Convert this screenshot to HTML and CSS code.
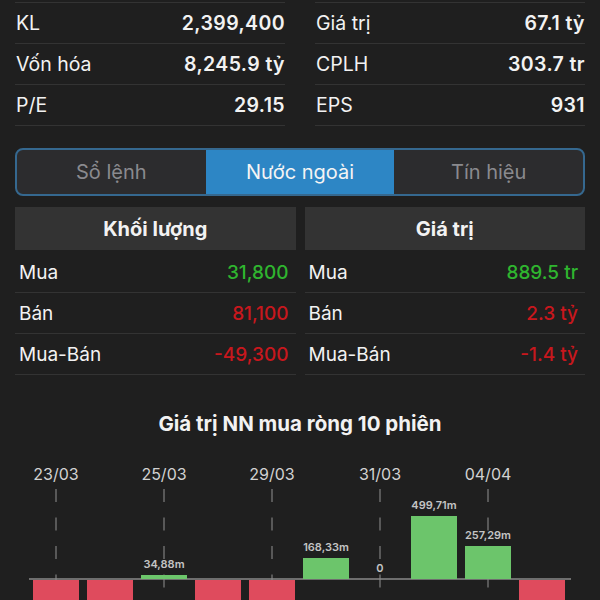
FILE: index.html
```html
<!DOCTYPE html>
<html lang="vi">
<head>
  <meta charset="UTF-8">
  <meta name="viewport" content="width=device-width, initial-scale=1.0">
  <title>Chi tiết cổ phiếu</title>
  <link rel="stylesheet" href="styles.css">
</head>
<body>

<!-- 기본 지표 -->
<div class="stats">
  <div class="stats-col">
    <div class="stat-row"><span class="stat-label">KL</span><span class="stat-value">2,399,400</span></div>
    <div class="stat-row"><span class="stat-label">Vốn hóa</span><span class="stat-value">8,245.9 tỷ</span></div>
    <div class="stat-row"><span class="stat-label">P/E</span><span class="stat-value">29.15</span></div>
  </div>
  <div class="stats-col">
    <div class="stat-row"><span class="stat-label">Giá trị</span><span class="stat-value">67.1 tỷ</span></div>
    <div class="stat-row"><span class="stat-label">CPLH</span><span class="stat-value">303.7 tr</span></div>
    <div class="stat-row"><span class="stat-label">EPS</span><span class="stat-value">931</span></div>
  </div>
</div>

<!-- 탭 -->
<div class="tabs">
  <button class="tab">Sổ lệnh</button>
  <button class="tab active">Nước ngoài</button>
  <button class="tab">Tín hiệu</button>
</div>

<!-- 외국인 매매 -->
<div class="foreign">
  <div class="foreign-col">
    <div class="foreign-head">Khối lượng</div>
    <div class="foreign-row"><span>Mua</span><span class="up">31,800</span></div>
    <div class="foreign-row"><span>Bán</span><span class="down">81,100</span></div>
    <div class="foreign-row"><span>Mua-Bán</span><span class="down">-49,300</span></div>
  </div>
  <div class="foreign-col">
    <div class="foreign-head">Giá trị</div>
    <div class="foreign-row"><span>Mua</span><span class="up">889.5 tr</span></div>
    <div class="foreign-row"><span>Bán</span><span class="down">2.3 tỷ</span></div>
    <div class="foreign-row"><span>Mua-Bán</span><span class="down">-1.4 tỷ</span></div>
  </div>
</div>

<!-- 차트 -->
<div class="chart">
  <div class="chart-title">Giá trị NN mua ròng 10 phiên</div>
  <svg class="chart-svg" width="600" height="170" viewBox="0 0 600 170">
    <g class="dates">
      <text x="56" y="44">23/03</text>
      <text x="164" y="44">25/03</text>
      <text x="272" y="44">29/03</text>
      <text x="380" y="44">31/03</text>
      <text x="488" y="44">04/04</text>
    </g>
    <g class="grid">
      <line x1="56" y1="53" x2="56" y2="170"/>
      <line x1="164" y1="53" x2="164" y2="170"/>
      <line x1="272" y1="53" x2="272" y2="170"/>
      <line x1="380" y1="53" x2="380" y2="170"/>
      <line x1="488" y1="53" x2="488" y2="170"/>
    </g>
    <line class="axis" x1="29" y1="143" x2="571" y2="143"/>
    <g class="bars-down">
      <rect x="33" y="144" width="46" height="30"/>
      <rect x="87" y="144" width="46" height="30"/>
      <rect x="195" y="144" width="46" height="30"/>
      <rect x="249" y="144" width="46" height="30"/>
      <rect x="519" y="144" width="46" height="30"/>
    </g>
    <g class="bars-up">
      <rect x="141" y="139" width="46" height="4"/>
      <rect x="303" y="122" width="46" height="21"/>
      <rect x="411" y="80" width="46" height="63"/>
      <rect x="465" y="110" width="46" height="33"/>
    </g>
    <g class="values">
      <text x="164" y="132">34,88m</text>
      <text x="326" y="115">168,33m</text>
      <text x="380" y="136">0</text>
      <text x="434" y="73">499,71m</text>
      <text x="488" y="103">257,29m</text>
    </g>
  </svg>
</div>

</body>
</html>
```

FILE: styles.css
```css
body {
  margin: 0;
  height: 600px;
  overflow: hidden;
  background-color: #1f1f1f;
  color: #f2f2f2;
  font-family: Inter, "Noto Sans", "DejaVu Sans", sans-serif;
}

/* 기본 지표 */
.stats {
  display: grid;
  grid-template-columns: 1fr 1fr;
  gap: 30px;
  padding: 0 15px;
  margin-top: 2px;
}

.stats-col {
  border-top: 1px solid #333;
}

.stat-row {
  display: flex;
  justify-content: space-between;
  align-items: center;
  height: 40px;
  border-bottom: 1px solid #333;
  font-size: 19.5px;
}

.stat-label {
  padding-left: 1px;
}

.stat-value {
  font-weight: 600;
  letter-spacing: 0.4px;
}

/* 탭 */
.tabs {
  display: grid;
  grid-template-columns: 1fr 1fr 1fr;
  margin: 22px 15px 0;
  height: 48px;
  box-sizing: border-box;
  border: 2px solid #35688f;
  border-radius: 8px;
  overflow: hidden;
  background-color: #2c2c2e;
}

.tab {
  border: none;
  background: transparent;
  color: #8a8a8e;
  font-family: inherit;
  font-size: 20px;
  padding: 0;
}

.tab.active {
  background-color: #2d86c5;
  color: #f4f4f4;
}

/* 외국인 매매 */
.foreign {
  display: grid;
  grid-template-columns: 1fr 1fr;
  gap: 9px;
  padding: 0 15px;
  margin-top: 11px;
}

.foreign-head {
  height: 43px;
  display: flex;
  justify-content: center;
  align-items: center;
  background-color: #333;
  font-size: 20px;
  font-weight: 700;
  margin-bottom: 2px;
}

.foreign-row {
  display: flex;
  justify-content: space-between;
  align-items: center;
  height: 40px;
  padding: 0 7px 0 4px;
  border-bottom: 1px solid #333;
  font-size: 19px;
}

.foreign-row .up {
  color: #2fb52f;
  font-weight: 500;
}

.foreign-row .down {
  color: #c8171d;
  font-weight: 500;
}

/* 차트 */
.chart-title {
  margin-top: 37px;
  text-align: center;
  font-size: 20.5px;
  font-weight: 700;
  line-height: 24px;
}

.chart-svg {
  display: block;
}

.dates text {
  fill: #d2d2d2;
  font-size: 16px;
  text-anchor: middle;
}

.grid line {
  stroke: #6c6c6c;
  stroke-width: 1.5;
  stroke-dasharray: 13 15.5;
}

.axis {
  stroke: #8a8a8a;
  stroke-width: 1.5;
}

.bars-down rect {
  fill: #df4b5d;
}

.bars-up rect {
  fill: #6cc56b;
}

.values text {
  fill: #c4c4c4;
  font-size: 11px;
  font-weight: 600;
  text-anchor: middle;
}
```
